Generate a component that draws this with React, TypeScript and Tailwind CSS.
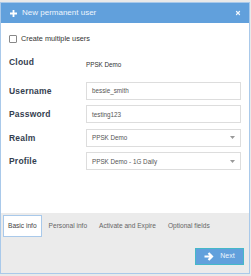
import { X } from 'lucide-react'

function Caret() {
  return (
    <svg width="5" height="3" viewBox="0 0 5 3" className="ml-auto">
      <path d="M0 0h5L2.5 3z" fill="#999" />
    </svg>
  )
}

function Row({ label, children }: { label: string; children: React.ReactNode }) {
  return (
    <div className="flex items-center h-[18px]">
      <div className="w-[77px] text-[8.5px] font-bold tracking-[0.2px] text-[#34404f]">{label}</div>
      <div className="flex-1">{children}</div>
    </div>
  )
}

export default function App() {
  const tabs = ['Basic info', 'Personal info', 'Activate and Expire', 'Optional fields']
  return (
    <div className="w-[251px] h-[276px] bg-[#e9e9e9] pt-[2px] font-['Liberation_Sans',Arial,sans-serif]">
      <div className="w-[250px] h-[272px] border border-[#a9c9ea] bg-white flex flex-col">
        <div className="h-[20px] bg-[#61a0dc] flex items-center pl-[9px] pr-[8px] text-white">
          <svg width="7" height="7" viewBox="0 0 7 7">
            <path d="M3.5 0v7M0 3.5h7" stroke="white" strokeWidth="1.8" />
          </svg>
          <span className="ml-[5px] text-[8px] text-[#eef5fc]">New permanent user</span>
          <X size={6} strokeWidth={5} className="ml-auto text-[#eef5fc]" />
        </div>

        <div className="flex-1 px-[8px] pt-[11px]">
          <label className="flex items-center gap-[4px] text-[7.3px] text-[#333]">
            <span className="w-[8px] h-[8px] border border-[#888] rounded-[1px] bg-white" />
            Create multiple users
          </label>

          <div className="mt-[8px] flex flex-col gap-[5.5px]">
            <Row label="Cloud">
              <span className="text-[6.3px] text-[#333]">PPSK Demo</span>
            </Row>
            <div className="h-0" />
            <Row label="Username">
              <div className="h-[18px] border border-[#ddd] flex items-center px-[5px] text-[6.3px] text-[#555]">
                bessie_smith
              </div>
            </Row>
            <Row label="Password">
              <div className="h-[18px] border border-[#ddd] flex items-center px-[5px] text-[6.3px] text-[#555]">
                testing123
              </div>
            </Row>
            <Row label="Realm">
              <div className="h-[18px] border border-[#ddd] flex items-center px-[5px] text-[6.3px] text-[#555]">
                PPSK Demo
                <Caret />
              </div>
            </Row>
            <Row label="Profile">
              <div className="h-[18px] border border-[#ddd] flex items-center px-[5px] text-[6.3px] text-[#555]">
                PPSK Demo - 1G Daily
                <Caret />
              </div>
            </Row>
          </div>
        </div>

        <div className="h-[60px] bg-[#ebebeb] flex flex-col">
          <div className="flex items-start pl-[2px] pt-[2px] gap-[2px]">
            {tabs.map((t, i) => (
              <div
                key={t}
                className={
                  i === 0
                    ? 'h-[22px] px-[4px] flex items-center whitespace-nowrap bg-white border border-[#a9c9ea] text-[6.6px] text-[#444]'
                    : 'h-[22px] px-[5px] flex items-center whitespace-nowrap text-[6.6px] text-[#666]'
                }
              >
                {t}
              </div>
            ))}
          </div>
          <div className="flex justify-end pr-[5px] mt-[11px]">
            <button className="w-[49px] h-[17px] bg-[#61a0dc] border border-[#45b8c8] flex items-center justify-center gap-[6px] text-[7px] text-[#eef5fc]">
              <svg width="10" height="9" viewBox="0 0 10 9">
                <path d="M0.5 4.5h7M4.5 1l3.5 3.5L4.5 8" stroke="white" strokeWidth="2.2" fill="none" />
              </svg>
              Next
            </button>
          </div>
        </div>
      </div>
    </div>
  )
}
